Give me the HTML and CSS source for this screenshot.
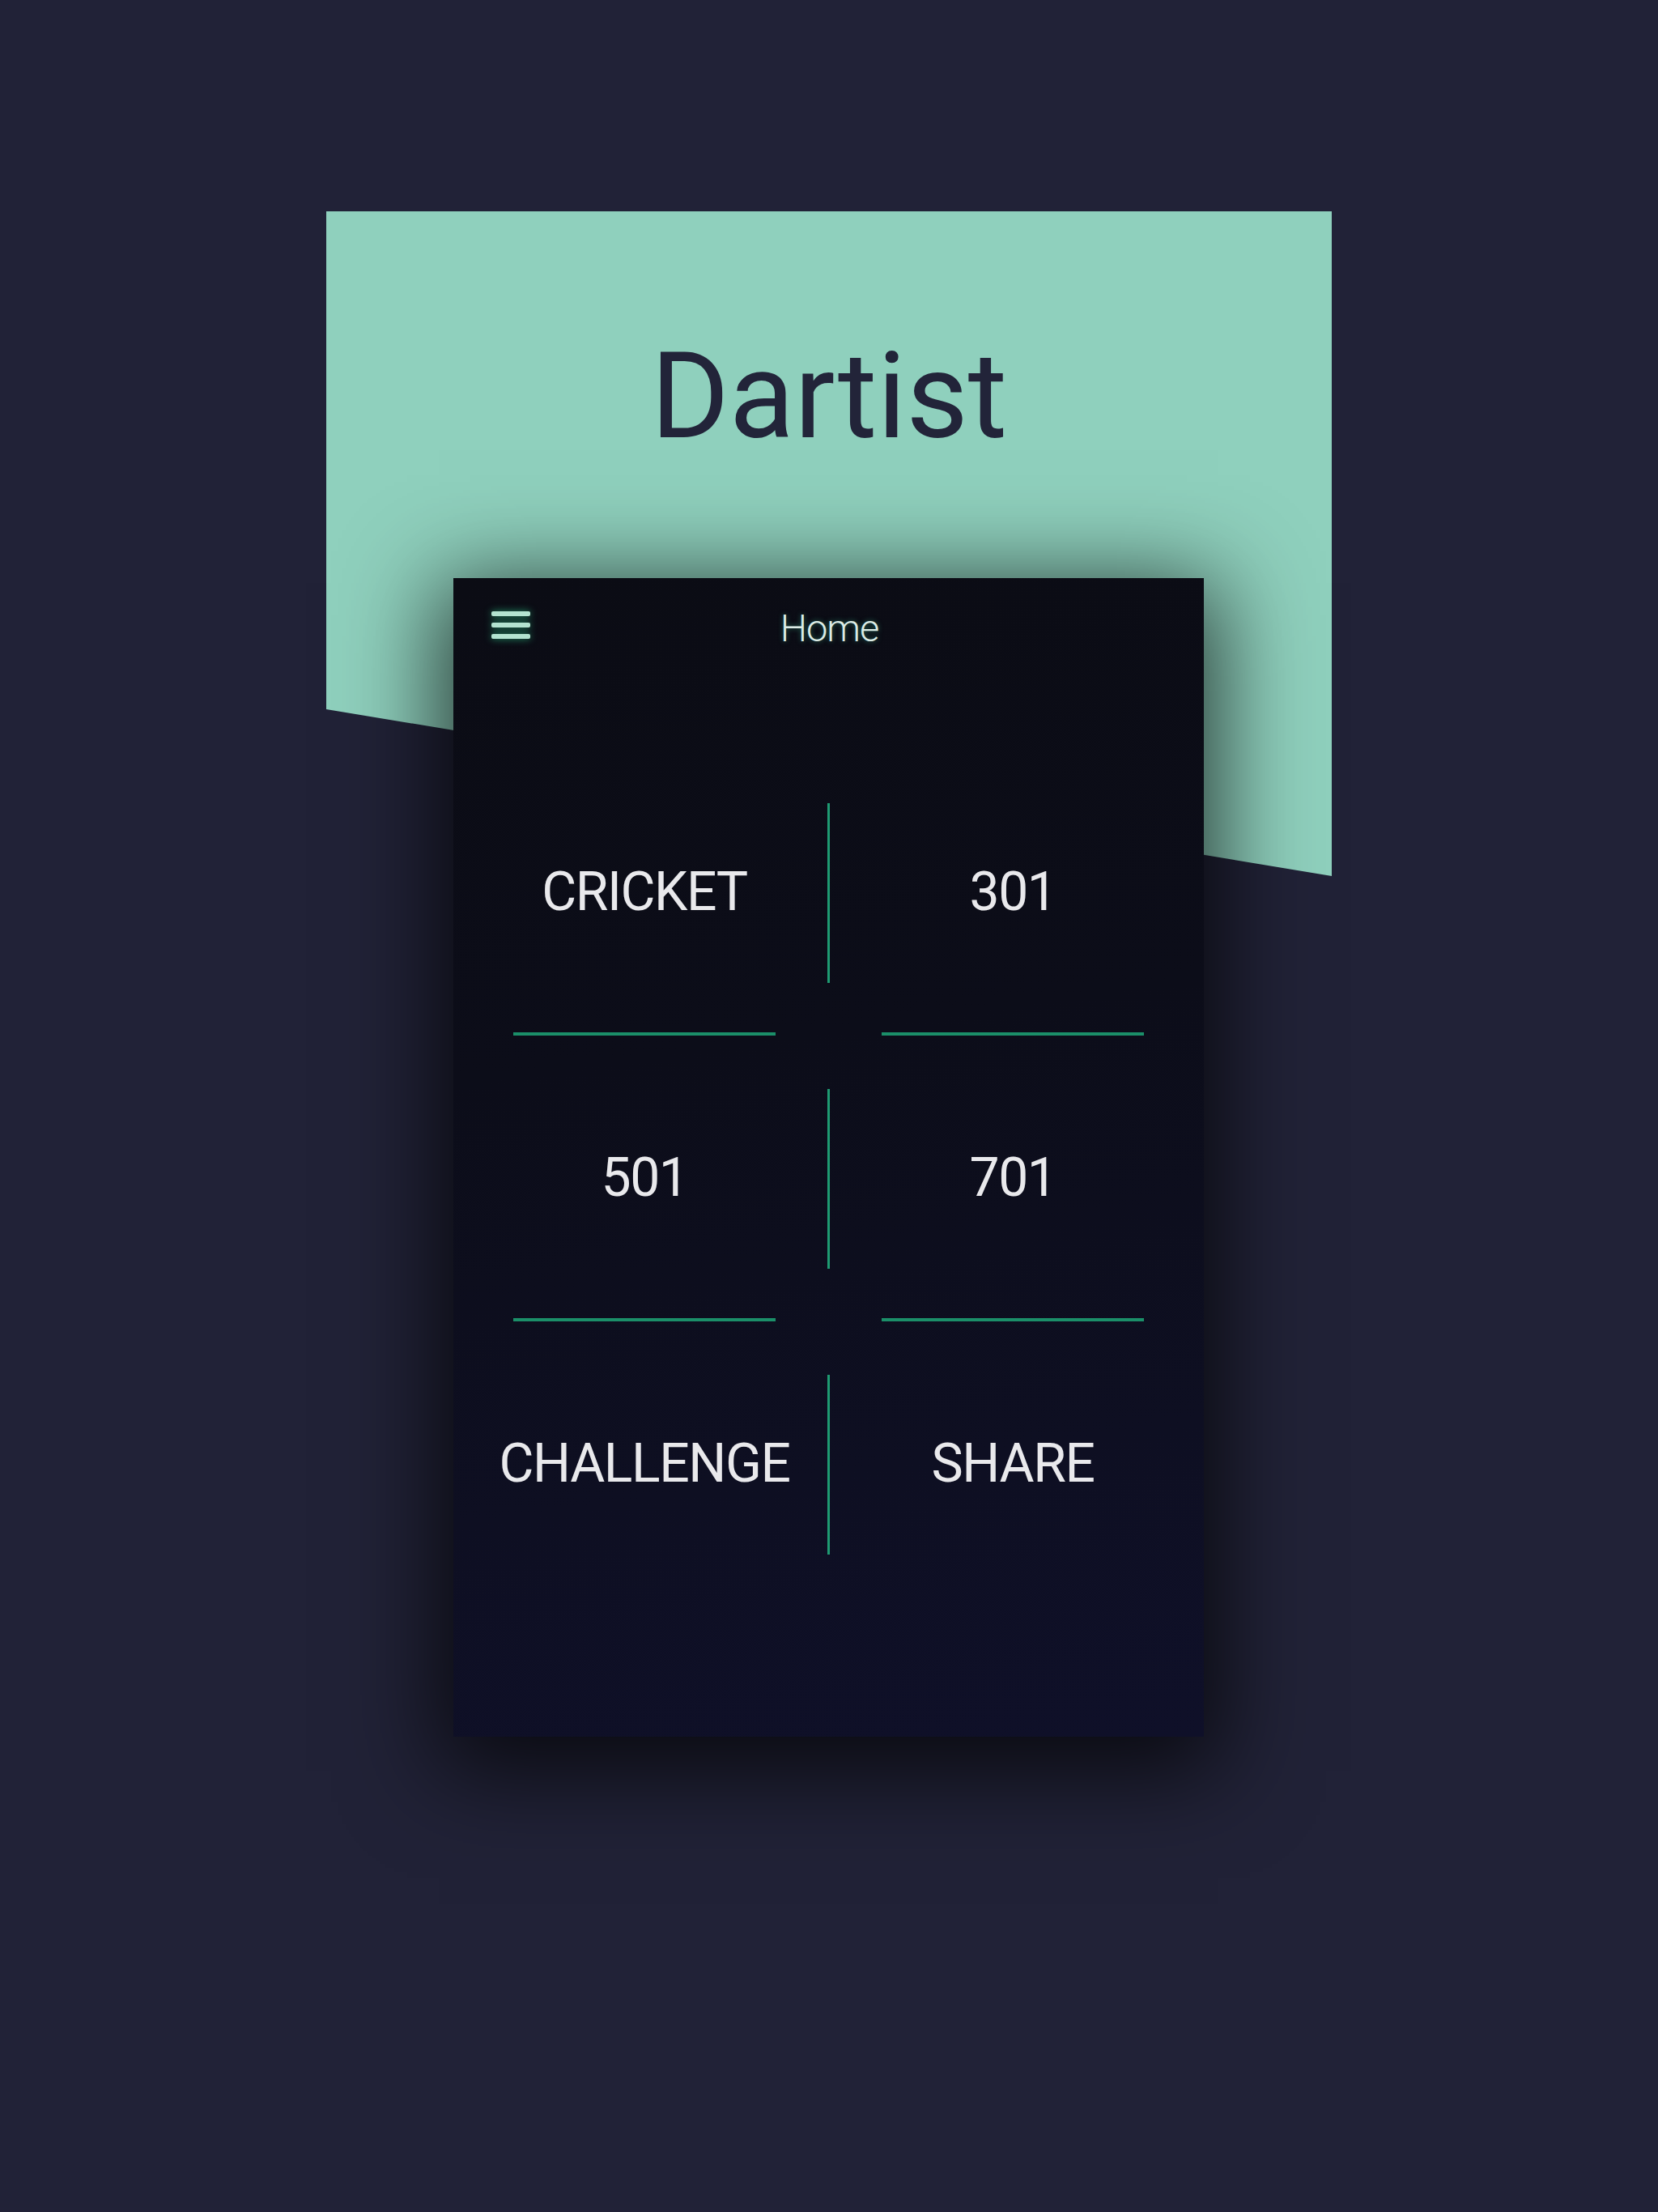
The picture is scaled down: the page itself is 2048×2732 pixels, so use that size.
FILE: index.html
```html
<!DOCTYPE html>
<html lang="en">
<head>
<meta charset="utf-8">
<title>Dartist</title>
<link rel="stylesheet" href="styles.css">
</head>
<body>
<main class="stage">
  <section class="hero">
    <h1 class="hero-title">Dartist</h1>
  </section>
  <div class="phone">
    <header class="phone-header">
      <svg class="menu-icon" width="48" height="34" viewBox="0 0 48 34" aria-hidden="true">
        <rect x="0" y="0" width="48" height="6" rx="2"/>
        <rect x="0" y="14" width="48" height="6" rx="2"/>
        <rect x="0" y="28" width="48" height="6" rx="2"/>
      </svg>
      <span class="phone-title">Home</span>
      <span></span>
    </header>
    <div class="menu-grid">
      <div class="menu-row">
        <div class="menu-cell"><span class="menu-label">CRICKET</span><span class="menu-line"></span></div>
        <span class="menu-divider"></span>
        <div class="menu-cell"><span class="menu-label">301</span><span class="menu-line"></span></div>
      </div>
      <div class="menu-row">
        <div class="menu-cell"><span class="menu-label">501</span><span class="menu-line"></span></div>
        <span class="menu-divider"></span>
        <div class="menu-cell"><span class="menu-label">701</span><span class="menu-line"></span></div>
      </div>
      <div class="menu-row">
        <div class="menu-cell"><span class="menu-label">CHALLENGE</span><span class="menu-line menu-line--none"></span></div>
        <span class="menu-divider"></span>
        <div class="menu-cell"><span class="menu-label">SHARE</span><span class="menu-line menu-line--none"></span></div>
      </div>
    </div>
  </div>
</main>
</body>
</html>
```
FILE: styles.css
```css
* { box-sizing: border-box; }

html, body {
  margin: 0;
  padding: 0;
}

body {
  background: #212237;
  font-family: Roboto, "Noto Sans", "Liberation Sans", sans-serif;
  min-height: 2732px;
}

.stage {
  padding-top: 261px;
  display: flex;
  flex-direction: column;
  align-items: center;
}

.hero {
  width: 1242px;
  height: 821px;
  background: #8fd0bd;
  clip-path: polygon(0 0, 100% 0, 100% 100%, 0 74.9%);
  padding-top: 155px;
  display: flex;
  justify-content: center;
  align-items: flex-start;
}

.hero-title {
  margin: 0;
  font-family: Roboto, "Noto Sans", sans-serif;
  font-weight: 400;
  font-size: 148px;
  line-height: 148px;
  color: #222439;
  letter-spacing: 0;
}

.phone {
  position: relative;
  width: 927px;
  height: 1431px;
  margin-top: -368px;
  margin-left: -1px;
  background: linear-gradient(172deg, #0b0c14 0%, #0c0d19 40%, #0e0f22 75%, #0f1029 100%);
  box-shadow: 0 24px 110px 18px rgba(0, 0, 0, 0.72);
  display: flex;
  flex-direction: column;
}

.phone-header {
  height: 212px;
  padding: 38px 47px 0;
  display: grid;
  grid-template-columns: 1fr auto 1fr;
  align-items: start;
}

.menu-icon {
  margin-top: 3px;
  fill: #b3e3d0;
  filter: drop-shadow(0 0 5px rgba(40, 190, 130, 0.75));
}

.phone-title {
  font-family: Roboto, "Noto Sans", sans-serif;
  font-weight: 300;
  font-size: 47px;
  line-height: 48px;
  letter-spacing: -1px;
  color: #dcece6;
  text-shadow: 0 0 6px rgba(60, 200, 150, 0.5);
  margin-left: 2px;
}

.menu-grid {
  padding: 0 10px;
  display: flex;
  flex-direction: column;
}

.menu-row {
  height: 353px;
  display: flex;
}

.menu-cell {
  flex: 1;
  display: flex;
  flex-direction: column;
  align-items: center;
}

.menu-label {
  flex: 1;
  display: flex;
  align-items: center;
  justify-content: center;
  font-family: Roboto, "Noto Sans", sans-serif;
  font-weight: 400;
  font-size: 66px;
  letter-spacing: -1.4px;
  color: #e9e9ec;
  padding-top: 2px;
}

.menu-line {
  width: 324px;
  height: 4px;
  background: #1b8f69;
}

.menu-line--none {
  background: transparent;
}

.menu-divider {
  width: 3px;
  margin: 66px 0 65px;
  background: #1e9b72;
}
```
